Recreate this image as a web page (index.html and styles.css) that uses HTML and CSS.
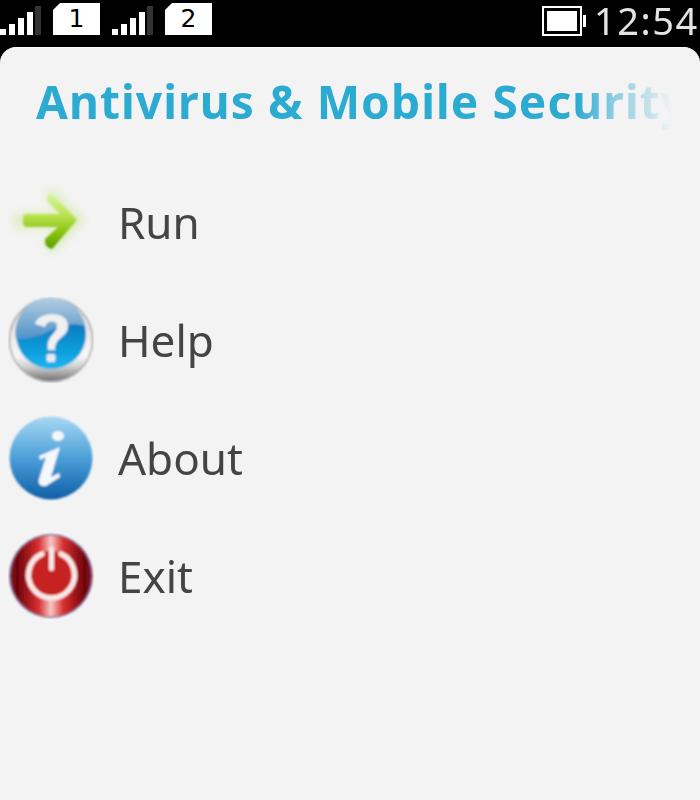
FILE: index.html
```html
<!DOCTYPE html>
<html lang="en">
<head>
  <meta charset="UTF-8" />
  <meta name="viewport" content="width=device-width, initial-scale=1.0" />
  <title>Antivirus &amp; Mobile Security</title>
  <link rel="stylesheet" href="styles.css">
</head>
<body>
  <!-- Status Bar -->
  <div id="status-bar">
    <div class="sim-group">
      <svg class="signal" width="41" height="32" viewBox="0 0 41 32">
        <rect x="0" y="26" width="6" height="6" fill="#fff"/>
        <rect x="9" y="21" width="6" height="11" fill="#fff"/>
        <rect x="18" y="15" width="6" height="17" fill="#fff"/>
        <rect x="27" y="9" width="6" height="23" fill="#fff"/>
        <rect x="35" y="3" width="6" height="29" fill="#333"/>
      </svg>
      <div class="sim-chip">1</div>
      <svg class="signal" width="41" height="32" viewBox="0 0 41 32">
        <rect x="0" y="26" width="6" height="6" fill="#fff"/>
        <rect x="9" y="21" width="6" height="11" fill="#fff"/>
        <rect x="18" y="15" width="6" height="17" fill="#fff"/>
        <rect x="27" y="9" width="6" height="23" fill="#fff"/>
        <rect x="35" y="3" width="6" height="29" fill="#333"/>
      </svg>
      <div class="sim-chip">2</div>
    </div>
    <div class="clock-group">
      <svg class="battery" width="45" height="30" viewBox="0 0 45 30">
        <rect x="1" y="1" width="38" height="28" fill="none" stroke="#fff" stroke-width="2"/>
        <rect x="5" y="5" width="30" height="20" fill="#fff"/>
        <rect x="41" y="9" width="3" height="12" fill="#fff"/>
      </svg>
      <span class="clock">12:54</span>
    </div>
  </div>

  <!-- Main Panel -->
  <div id="panel">
    <h1 class="app-title">Antivirus &amp; Mobile Security</h1>
    <div class="menu">
      <div class="menu-row">
        <svg class="menu-icon" width="86" height="86" viewBox="0 0 86 86">
          <defs>
            <linearGradient id="arrow-fill" x1="0" y1="0" x2="0" y2="1">
              <stop offset="0" stop-color="#d8f5a0"/>
              <stop offset="0.4" stop-color="#b8e24e"/>
              <stop offset="0.7" stop-color="#86c410"/>
              <stop offset="1" stop-color="#5a9e00"/>
            </linearGradient>
            <filter id="arrow-glow" x="-30%" y="-30%" width="160%" height="160%">
              <feGaussianBlur stdDeviation="5"/>
            </filter>
            <filter id="soft" x="-10%" y="-10%" width="120%" height="120%">
              <feGaussianBlur stdDeviation="0.8"/>
            </filter>
          </defs>
          <path d="M6 34 H52 L36 14 L46 10 L78 41 L46 74 L34 66 L50 50 H6 Z" fill="#d4eaa8" opacity="0.65" filter="url(#arrow-glow)"/>
          <path d="M15 38 Q15 35 20 35 H52 L39 22 Q38 15 44 15 L69 41 L44 70 Q36 68 37 60 L50 48 H20 Q15 48 15 44 Z" fill="url(#arrow-fill)" filter="url(#soft)"/>
        </svg>
        <span class="menu-label">Run</span>
      </div>
      <div class="menu-row">
        <svg class="menu-icon" width="86" height="86" viewBox="0 0 86 86">
          <defs>
            <linearGradient id="help-rim" x1="0" y1="0" x2="0" y2="1">
              <stop offset="0" stop-color="#d8d8d8"/>
              <stop offset="0.7" stop-color="#f6f6f6"/>
              <stop offset="0.82" stop-color="#d0d0d0"/>
              <stop offset="1" stop-color="#707070"/>
            </linearGradient>
            <linearGradient id="help-fill" x1="0" y1="0" x2="0" y2="1">
              <stop offset="0.2" stop-color="#0a6cb2"/>
              <stop offset="1" stop-color="#14b6f0"/>
            </linearGradient>
            <linearGradient id="help-gloss" x1="0" y1="0" x2="0" y2="1">
              <stop offset="0" stop-color="#b4cde2"/>
              <stop offset="1" stop-color="#4f92c8"/>
            </linearGradient>
          </defs>
          <g filter="url(#soft)">
            <circle cx="43" cy="43" r="41.5" fill="url(#help-rim)" stroke="#a8a8a8" stroke-width="1.5"/>
            <circle cx="43" cy="37" r="35" fill="url(#help-fill)"/>
            <path d="M8 42 A35 35 0 0 1 77 29 C62 24 48 31 35 37 C25 41 16 42 8 42 Z" fill="url(#help-gloss)"/>
            <path d="M27 27 C30 14 60 13 60 29 C60 41 47 39 47 53 H40 C38 38 49 37 49 29 C49 23 39 23 37 30 Z" fill="#f0f0f0"/>
            <rect x="38.5" y="57" width="9" height="8" rx="2" fill="#eaeaea"/>
          </g>
        </svg>
        <span class="menu-label">Help</span>
      </div>
      <div class="menu-row">
        <svg class="menu-icon" width="86" height="86" viewBox="0 0 86 86">
          <defs>
            <linearGradient id="info-fill" x1="0" y1="0" x2="0" y2="1">
              <stop offset="0" stop-color="#a8d8f2"/>
              <stop offset="0.5" stop-color="#4c9fd8"/>
              <stop offset="1" stop-color="#0f5ea8"/>
            </linearGradient>
          </defs>
          <g filter="url(#soft)">
            <circle cx="43" cy="43" r="41.5" fill="url(#info-fill)"/>
            <ellipse cx="50" cy="21" rx="6" ry="5" fill="#f4f8fc"/>
            <path d="M31 41 L52 32 L43 62 L51 58 L52 62 L38 71 Q29 72 31 64 L38 42 L32 45 Z" fill="#f4f8fc"/>
          </g>
        </svg>
        <span class="menu-label">About</span>
      </div>
      <div class="menu-row">
        <svg class="menu-icon" width="86" height="86" viewBox="0 0 86 86">
          <defs>
            <linearGradient id="exit-fill" x1="0" y1="0" x2="1" y2="0">
              <stop offset="0" stop-color="#7a1a30"/>
              <stop offset="0.08" stop-color="#6e0208"/>
              <stop offset="0.35" stop-color="#d83030"/>
              <stop offset="0.5" stop-color="#f6c8c8"/>
              <stop offset="0.65" stop-color="#d83030"/>
              <stop offset="0.92" stop-color="#6e0208"/>
              <stop offset="1" stop-color="#7a1a30"/>
            </linearGradient>
          </defs>
          <g filter="url(#soft)">
            <circle cx="43" cy="43" r="42" fill="#8a6a90"/>
            <circle cx="43" cy="43" r="40.5" fill="url(#exit-fill)"/>
            <circle cx="43" cy="42" r="24" fill="#c62020"/>
            <path d="M34 21 A23 23 0 1 0 53 21" fill="none" stroke="#fbe6e6" stroke-width="5.5" stroke-linecap="round"/>
            <rect x="41" y="14" width="5" height="24" rx="2" fill="#fbe6e6"/>
          </g>
        </svg>
        <span class="menu-label">Exit</span>
      </div>
    </div>
  </div>
</body>
</html>
```

FILE: styles.css
```css
/* Reset and Basic Styles */
* {
  margin: 0;
  padding: 0;
  box-sizing: border-box;
}
html, body {
  width: 700px;
  height: 800px;
  overflow: hidden;
}
body {
  font-family: 'Noto Sans', sans-serif;
  background: #000;
  display: flex;
  flex-direction: column;
}
/* Status Bar */
#status-bar {
  height: 47px;
  flex-shrink: 0;
  display: flex;
  justify-content: space-between;
  overflow: hidden;
  padding-top: 3px;
}
.sim-group {
  display: flex;
  align-items: flex-start;
  gap: 12px;
}
.sim-chip {
  width: 47px;
  height: 32px;
  background: #fff;
  color: #000;
  font-family: 'DejaVu Sans', sans-serif;
  font-size: 25px;
  line-height: 31px;
  text-align: center;
  clip-path: polygon(7px 0, 100% 0, 100% 100%, 0 100%, 0 7px);
}
.clock-group {
  display: flex;
  align-items: flex-start;
  width: 158px;
  flex-shrink: 0;
  gap: 7px;
  padding-top: 3px;
}
.clock {
  color: #e4e4e4;
  font-size: 38px;
  line-height: 28px;
  letter-spacing: 1.5px;
  white-space: nowrap;
  filter: blur(0.4px);
}
/* Main Panel */
#panel {
  flex: 1;
  background: #f3f3f3;
  border-top: 1px solid #fafafa;
  border-radius: 16px 16px 0 0;
  padding-top: 20px;
}
.app-title {
  margin-left: 36px;
  width: 636px;
  overflow: hidden;
  white-space: nowrap;
  color: #2baad2;
  font-size: 46px;
  font-weight: 700;
  letter-spacing: 1.1px;
  line-height: 66px;
  filter: blur(0.5px);
  -webkit-mask-image: linear-gradient(90deg, #000 0, #000 85%, rgba(0,0,0,0.5) 91%, rgba(0,0,0,0.25) 96%, transparent 100%);
  mask-image: linear-gradient(90deg, #000 0, #000 85%, rgba(0,0,0,0.5) 91%, rgba(0,0,0,0.25) 96%, transparent 100%);
}
/* Menu List */
.menu {
  margin-top: 29px;
  display: flex;
  flex-direction: column;
}
.menu-row {
  height: 118px;
  display: flex;
  align-items: center;
  padding-left: 8px;
  gap: 24px;
}
.menu-icon {
  flex-shrink: 0;
}
.menu-label {
  color: #444;
  font-size: 44px;
  line-height: 60px;
  filter: blur(0.5px);
}
```
